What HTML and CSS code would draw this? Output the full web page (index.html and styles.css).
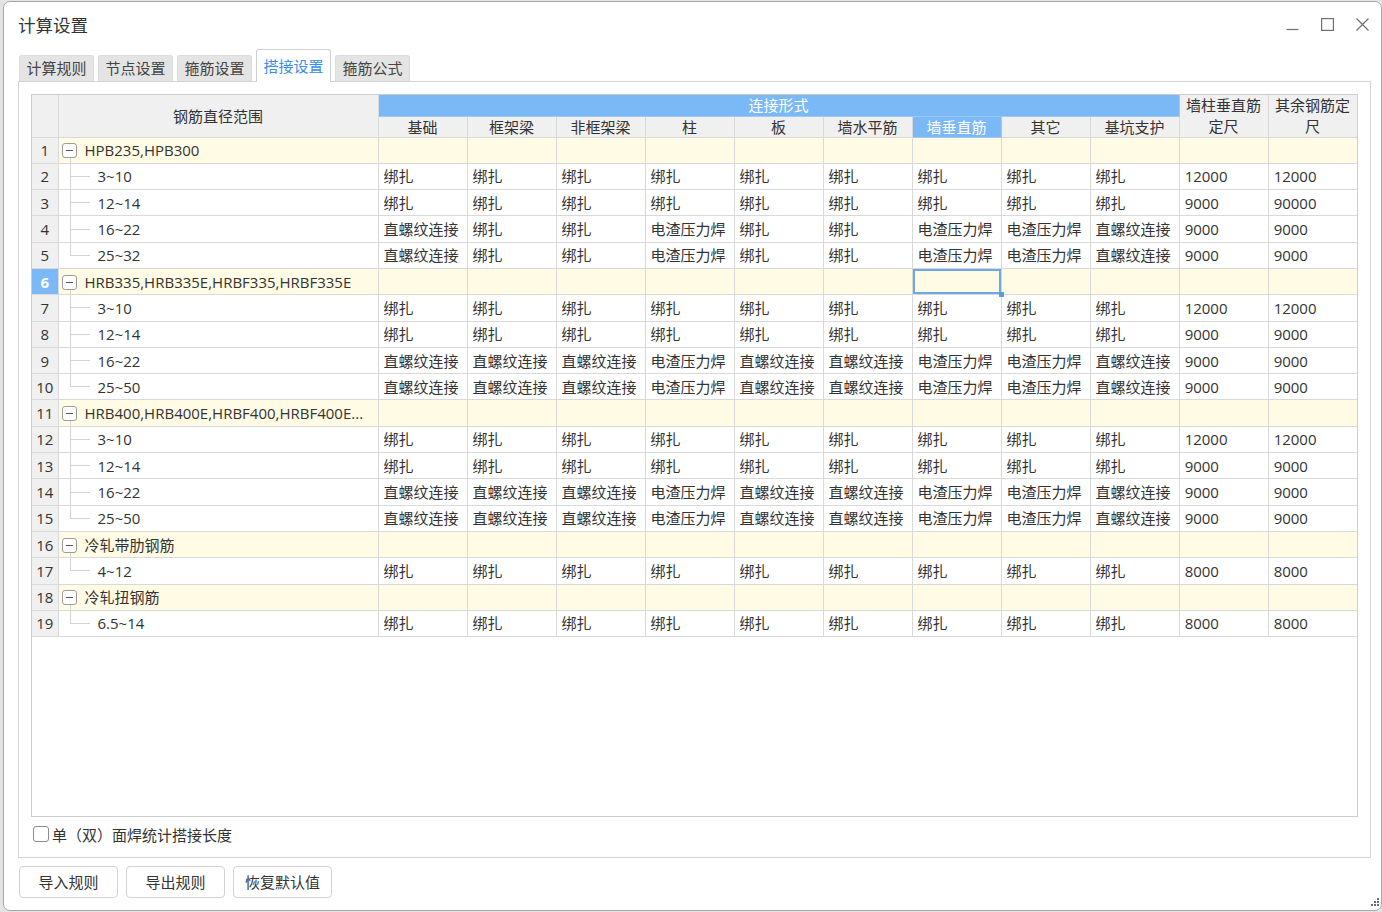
FILE: index.html
```html
<!DOCTYPE html>
<html lang="zh-CN">
<head>
<meta charset="utf-8">
<title>计算设置</title>
<link rel="stylesheet" href="styles.css">
</head>
<body>
<div class="window">
  <div class="titlebar">
    <div class="title">计算设置</div>
    <div class="controls">
      <svg class="ctl" viewBox="0 0 13 13"><path d="M0.5 11.5H12.5" stroke="#707070" stroke-width="1.2" fill="none"/></svg>
      <svg class="ctl" viewBox="0 0 13 13"><rect x="0.6" y="0.6" width="11.8" height="11.8" stroke="#707070" stroke-width="1.2" fill="none"/></svg>
      <svg class="ctl" viewBox="0 0 13 13"><path d="M0.5 0.5L12.5 12.5M12.5 0.5L0.5 12.5" stroke="#707070" stroke-width="1.2" fill="none"/></svg>
    </div>
  </div>
  <div class="tabs">
    <div class="tab">计算规则</div>
    <div class="tab">节点设置</div>
    <div class="tab">箍筋设置</div>
    <div class="tab active">搭接设置</div>
    <div class="tab">箍筋公式</div>
  </div>
  <div class="panel">
    <div class="grid">
      <table>
        <colgroup>
          <col class="c-rn"><col class="c-rng">
          <col class="c-d"><col class="c-d"><col class="c-d"><col class="c-d"><col class="c-d"><col class="c-d"><col class="c-d"><col class="c-d"><col class="c-d"><col class="c-d"><col class="c-d">
        </colgroup>
        <thead>
          <tr class="h1">
            <th rowspan="2" class="rn"></th>
            <th rowspan="2">钢筋直径范围</th>
            <th colspan="9" class="blue">连接形式</th>
            <th rowspan="2" class="wrap">墙柱垂直筋定尺</th>
            <th rowspan="2" class="wrap">其余钢筋定尺</th>
          </tr>
          <tr class="h2">
            <th>基础</th><th>框架梁</th><th>非框架梁</th><th>柱</th><th>板</th><th>墙水平筋</th><th class="blue">墙垂直筋</th><th>其它</th><th>基坑支护</th>
          </tr>
        </thead>
        <tbody>
          <tr class="grp"><td class="rn">1</td><td class="rng"><span class="tog"></span>HPB235,HPB300</td><td></td><td></td><td></td><td></td><td></td><td></td><td></td><td></td><td></td><td></td><td></td></tr>
          <tr><td class="rn">2</td><td class="leaf">3~10</td><td>绑扎</td><td>绑扎</td><td>绑扎</td><td>绑扎</td><td>绑扎</td><td>绑扎</td><td>绑扎</td><td>绑扎</td><td>绑扎</td><td>12000</td><td>12000</td></tr>
          <tr><td class="rn">3</td><td class="leaf">12~14</td><td>绑扎</td><td>绑扎</td><td>绑扎</td><td>绑扎</td><td>绑扎</td><td>绑扎</td><td>绑扎</td><td>绑扎</td><td>绑扎</td><td>9000</td><td>90000</td></tr>
          <tr><td class="rn">4</td><td class="leaf">16~22</td><td>直螺纹连接</td><td>绑扎</td><td>绑扎</td><td>电渣压力焊</td><td>绑扎</td><td>绑扎</td><td>电渣压力焊</td><td>电渣压力焊</td><td>直螺纹连接</td><td>9000</td><td>9000</td></tr>
          <tr><td class="rn">5</td><td class="leaf last">25~32</td><td>直螺纹连接</td><td>绑扎</td><td>绑扎</td><td>电渣压力焊</td><td>绑扎</td><td>绑扎</td><td>电渣压力焊</td><td>电渣压力焊</td><td>直螺纹连接</td><td>9000</td><td>9000</td></tr>

          <tr class="grp"><td class="rn sel-rn">6</td><td class="rng"><span class="tog"></span>HRB335,HRB335E,HRBF335,HRBF335E</td><td></td><td></td><td></td><td></td><td></td><td></td><td class="sel"><span class="handle"></span></td><td></td><td></td><td></td><td></td></tr>
          <tr><td class="rn">7</td><td class="leaf">3~10</td><td>绑扎</td><td>绑扎</td><td>绑扎</td><td>绑扎</td><td>绑扎</td><td>绑扎</td><td>绑扎</td><td>绑扎</td><td>绑扎</td><td>12000</td><td>12000</td></tr>
          <tr><td class="rn">8</td><td class="leaf">12~14</td><td>绑扎</td><td>绑扎</td><td>绑扎</td><td>绑扎</td><td>绑扎</td><td>绑扎</td><td>绑扎</td><td>绑扎</td><td>绑扎</td><td>9000</td><td>9000</td></tr>
          <tr><td class="rn">9</td><td class="leaf">16~22</td><td>直螺纹连接</td><td>直螺纹连接</td><td>直螺纹连接</td><td>电渣压力焊</td><td>直螺纹连接</td><td>直螺纹连接</td><td>电渣压力焊</td><td>电渣压力焊</td><td>直螺纹连接</td><td>9000</td><td>9000</td></tr>
          <tr><td class="rn">10</td><td class="leaf last">25~50</td><td>直螺纹连接</td><td>直螺纹连接</td><td>直螺纹连接</td><td>电渣压力焊</td><td>直螺纹连接</td><td>直螺纹连接</td><td>电渣压力焊</td><td>电渣压力焊</td><td>直螺纹连接</td><td>9000</td><td>9000</td></tr>

          <tr class="grp"><td class="rn">11</td><td class="rng"><span class="tog"></span>HRB400,HRB400E,HRBF400,HRBF400E...</td><td></td><td></td><td></td><td></td><td></td><td></td><td></td><td></td><td></td><td></td><td></td></tr>
          <tr><td class="rn">12</td><td class="leaf">3~10</td><td>绑扎</td><td>绑扎</td><td>绑扎</td><td>绑扎</td><td>绑扎</td><td>绑扎</td><td>绑扎</td><td>绑扎</td><td>绑扎</td><td>12000</td><td>12000</td></tr>
          <tr><td class="rn">13</td><td class="leaf">12~14</td><td>绑扎</td><td>绑扎</td><td>绑扎</td><td>绑扎</td><td>绑扎</td><td>绑扎</td><td>绑扎</td><td>绑扎</td><td>绑扎</td><td>9000</td><td>9000</td></tr>
          <tr><td class="rn">14</td><td class="leaf">16~22</td><td>直螺纹连接</td><td>直螺纹连接</td><td>直螺纹连接</td><td>电渣压力焊</td><td>直螺纹连接</td><td>直螺纹连接</td><td>电渣压力焊</td><td>电渣压力焊</td><td>直螺纹连接</td><td>9000</td><td>9000</td></tr>
          <tr><td class="rn">15</td><td class="leaf last">25~50</td><td>直螺纹连接</td><td>直螺纹连接</td><td>直螺纹连接</td><td>电渣压力焊</td><td>直螺纹连接</td><td>直螺纹连接</td><td>电渣压力焊</td><td>电渣压力焊</td><td>直螺纹连接</td><td>9000</td><td>9000</td></tr>

          <tr class="grp"><td class="rn">16</td><td class="rng"><span class="tog"></span>冷轧带肋钢筋</td><td></td><td></td><td></td><td></td><td></td><td></td><td></td><td></td><td></td><td></td><td></td></tr>
          <tr><td class="rn">17</td><td class="leaf last">4~12</td><td>绑扎</td><td>绑扎</td><td>绑扎</td><td>绑扎</td><td>绑扎</td><td>绑扎</td><td>绑扎</td><td>绑扎</td><td>绑扎</td><td>8000</td><td>8000</td></tr>

          <tr class="grp"><td class="rn">18</td><td class="rng"><span class="tog"></span>冷轧扭钢筋</td><td></td><td></td><td></td><td></td><td></td><td></td><td></td><td></td><td></td><td></td><td></td></tr>
          <tr><td class="rn">19</td><td class="leaf last">6.5~14</td><td>绑扎</td><td>绑扎</td><td>绑扎</td><td>绑扎</td><td>绑扎</td><td>绑扎</td><td>绑扎</td><td>绑扎</td><td>绑扎</td><td>8000</td><td>8000</td></tr>
        </tbody>
      </table>
    </div>
    <label class="checkrow"><span class="checkbox"></span>单（双）面焊统计搭接长度</label>
  </div>
  <div class="buttons">
    <div class="btn">导入规则</div>
    <div class="btn">导出规则</div>
    <div class="btn">恢复默认值</div>
  </div>
  <svg class="grip" viewBox="0 0 10 12" width="10" height="12">
    <rect x="7" y="1" width="2" height="2" fill="#6b6b6b"/>
    <rect x="4" y="4" width="2" height="2" fill="#6b6b6b"/>
    <rect x="7" y="4" width="2" height="2" fill="#6b6b6b"/>
    <rect x="1" y="7" width="2" height="2" fill="#6b6b6b"/>
    <rect x="4" y="7" width="2" height="2" fill="#6b6b6b"/>
    <rect x="7" y="7" width="2" height="2" fill="#6b6b6b"/>
  </svg>
</div>
</body>
</html>
```
FILE: styles.css
```css
* { box-sizing: border-box; }
html, body { margin: 0; padding: 0; }
body {
  background: #e4e4e4;
  font-family: "Open Sans", "Noto Sans CJK SC", sans-serif;
  color: #333;
  overflow: hidden;
  width: 1382px;
  height: 912px;
}
.window {
  margin: 1px 0 0 3px;
  width: 1379px;
  height: 910px;
  background: #fff;
  border: 1px solid #a8a8a8;
  border-radius: 7px;
  position: relative;
  display: flex;
  flex-direction: column;
  padding-left: 14px;
}
.titlebar {
  height: 46px;
  display: flex;
  align-items: center;
  justify-content: space-between;
  padding-right: 12px;
}
.title {
  font-size: 17.5px;
  line-height: 24px;
  color: #333;
}
.controls {
  display: flex;
  gap: 22px;
  align-items: center;
  margin-top: -2px;
}
.ctl { width: 13px; height: 13px; display: block; }

.tabs {
  height: 33px;
  display: flex;
  align-items: flex-end;
  gap: 4px;
  padding-left: 1px;
}
.tab {
  height: 26px;
  width: 75px;
  background: #e4e4e4;
  border: 1px solid #dcdcdc;
  border-bottom: none;
  border-radius: 3px 3px 0 0;
  font-size: 15px;
  line-height: 25px;
  text-align: center;
  color: #444;
}
.tab.active {
  height: 33px;
  width: 75px;
  margin-bottom: -1px;
  background: #fff;
  border-color: #cfcfcf;
  color: #3a8ee6;
  line-height: 32px;
  padding-bottom: 3px;
  position: relative;
  z-index: 1;
}

.panel {
  width: 1353px;
  height: 777px;
  border: 1px solid #d3d3d3;
  padding: 12px 12px 0 12px;
  display: flex;
  flex-direction: column;
}
.grid {
  height: 723px;
  border: 1px solid #cdcdcd;
  background: #fff;
  overflow: hidden;
}
table {
  border-collapse: collapse;
  table-layout: fixed;
  width: 1324px;
  font-size: 15px;
}
col.c-rn { width: 26px; }
col.c-rng { width: 320px; }
col.c-d { width: 89px; }
th, td {
  border: 1px solid #d9d9d9;
  padding: 0 0 0 5px;
  white-space: nowrap;
  overflow: hidden;
  text-align: left;
  font-weight: normal;
  color: #333;
  line-height: 20px;
}
th {
  background: #f0f0f0;
  text-align: center;
  padding: 0;
}
thead tr:first-child th { border-top: none; }
tr > :first-child { border-left: none; }
tr.h1 { height: 21px; }
tr.h2 { height: 20px; }
th.blue { background: #7ab8f6; color: #fff; border-color: #9fcaf6; }
th.wrap { white-space: normal; line-height: 20.5px; padding: 0 3px; word-break: break-all; }
tbody tr { height: 26.3px; }
td.rn {
  background: #f0f0f0;
  text-align: center;
  padding: 0;
}
td.sel-rn { background: #7ab8f6; color: #fff; font-weight: bold; }
tr.grp { background: #fffbe5; }
td.rng {
  padding-left: 3px;
  background-image: linear-gradient(#d4d4d4, #d4d4d4);
  background-repeat: no-repeat;
  background-position: 11px 100%;
  background-size: 1px 5px;
}
.tog {
  display: inline-block;
  vertical-align: middle;
  width: 15px;
  height: 15px;
  border: 1px solid #9c9c9c;
  border-radius: 3px;
  margin: -3px 8px 0 0;
  background: #fff linear-gradient(#555, #555) no-repeat center / 7px 1px;
}
td.leaf {
  padding-left: 39px;
  background-image: linear-gradient(#d4d4d4, #d4d4d4), linear-gradient(#d4d4d4, #d4d4d4);
  background-repeat: no-repeat;
  background-position: 11px 0, 11px 50%;
  background-size: 1px 100%, 20px 1px;
}
td.leaf.last { background-size: 1px 50%, 20px 1px; }
td.sel {
  position: relative;
  box-shadow: inset 0 0 0 2px #6ea8e8;
  overflow: visible;
}
.handle {
  position: absolute;
  right: -3px;
  bottom: -3px;
  width: 5px;
  height: 5px;
  background: #5b9be2;
  z-index: 2;
}

.checkrow {
  display: flex;
  align-items: center;
  gap: 3px;
  height: 34px;
  padding-left: 2px;
  font-size: 15px;
  color: #333;
  font-family: "Noto Sans CJK SC", sans-serif;
}
.checkbox {
  width: 16px;
  height: 16px;
  border: 1px solid #8c8c8c;
  border-radius: 3px;
  background: #fff;
}

.buttons {
  display: flex;
  gap: 8px;
  margin-top: 8px;
  padding-left: 1px;
}
.btn {
  width: 99px;
  height: 32px;
  border: 1px solid #d2d2d2;
  border-radius: 4px;
  background: #fff;
  font-size: 15px;
  line-height: 30px;
  text-align: center;
  color: #333;
  font-family: "Noto Sans CJK SC", sans-serif;
}
.grip {
  position: absolute;
  right: 1px;
  bottom: 1px;
}
```
